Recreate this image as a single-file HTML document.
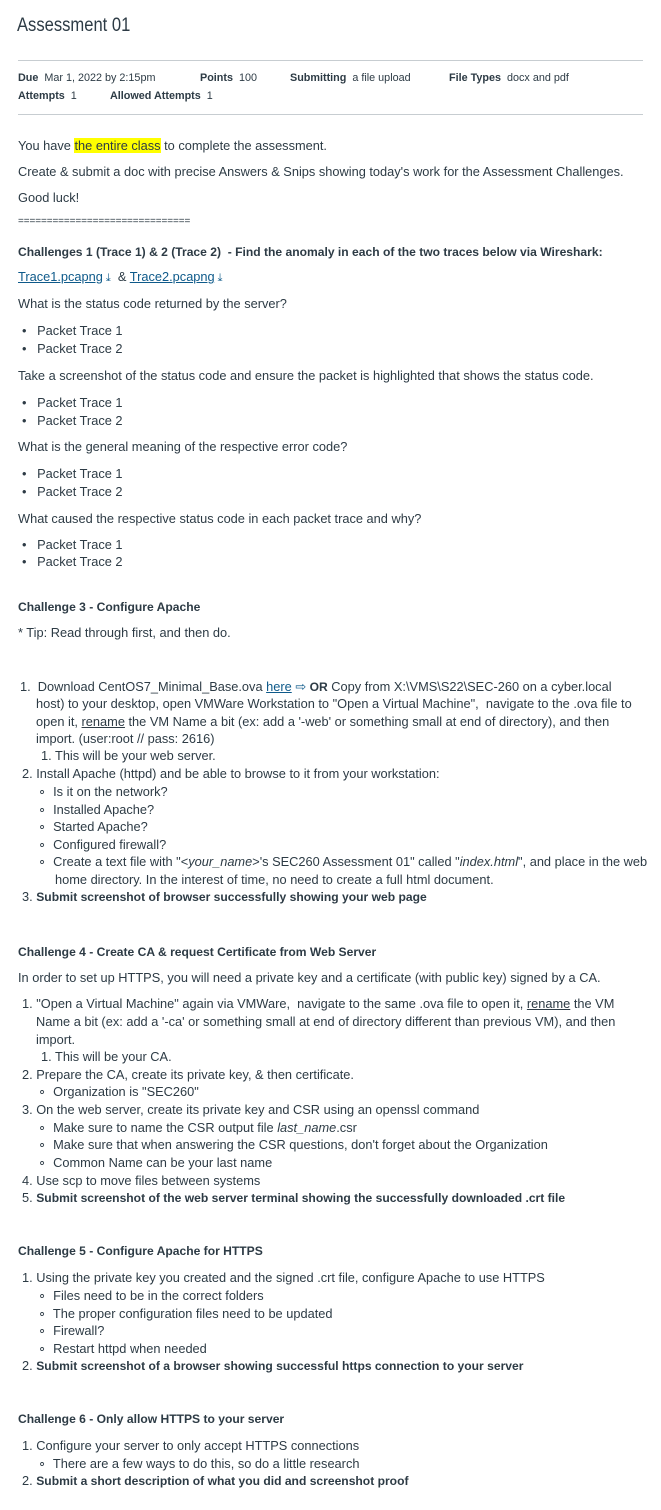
<!DOCTYPE html>
<html><head><meta charset="utf-8"><style>
body{margin:0;width:661px;height:1510px;background:#fff;position:relative;font-family:"Liberation Sans",sans-serif;color:#2d3b45;font-size:12.8px;overflow:hidden}
.l{position:absolute;white-space:nowrap;line-height:18px}
.b,b{font-weight:bold;font-size:12.1px}
a{color:#0e5a8a;text-decoration:underline}
.hr{position:absolute;left:18px;width:625px;height:1px;background:#c7cdd1}
.lb{font-weight:bold}
.meta{font-size:10.8px}
.dl{display:inline-block;font-size:11px;color:#0e5a8a;margin-left:3px}
</style></head><body>
<div class="l" style="top:10px;left:17px;font-size:19.5px;line-height:30px;transform:scaleX(0.85);transform-origin:left">Assessment 01</div>
<div class="hr" style="top:60px"></div>
<div class="l meta" style="top:69px;left:18px"><span class="lb">Due</span>&nbsp; Mar 1, 2022 by 2:15pm</div>
<div class="l meta" style="top:69px;left:200px"><span class="lb">Points</span>&nbsp; 100</div>
<div class="l meta" style="top:69px;left:290px"><span class="lb">Submitting</span>&nbsp; a file upload</div>
<div class="l meta" style="top:69px;left:449px"><span class="lb">File Types</span>&nbsp; docx and pdf</div>
<div class="l meta" style="top:87px;left:18px"><span class="lb">Attempts</span>&nbsp; 1</div>
<div class="l meta" style="top:87px;left:110px"><span class="lb">Allowed Attempts</span>&nbsp; 1</div>
<div class="hr" style="top:114px"></div>

<div class="l" style="top:137px;left:18px">You have <span style="background:#ffff00">the entire class</span> to complete the assessment.</div>
<div class="l" style="top:163px;left:18px">Create &amp; submit a doc with precise Answers &amp; Snips showing today's work for the Assessment Challenges.</div>
<div class="l" style="top:189px;left:18px">Good luck!</div>
<div class="l" style="top:213px;left:18px;font-size:10px;letter-spacing:-0.1px">==============================</div>
<div class="l b" style="top:243px;left:18px">Challenges 1 (Trace 1) &amp; 2 (Trace 2)&nbsp; - Find the anomaly in each of the two traces below via Wireshark:</div>
<div class="l" style="top:268px;left:18px"><a>Trace1.pcapng</a><span class="dl">⤓</span>&nbsp; &amp; <a>Trace2.pcapng</a><span class="dl">⤓</span></div>
<div class="l" style="top:295px;left:18px">What is the status code returned by the server?</div>
<div class="l" style="top:322px;left:22px">•&nbsp;&nbsp; Packet Trace 1</div>
<div class="l" style="top:340px;left:22px">•&nbsp;&nbsp; Packet Trace 2</div>
<div class="l" style="top:367px;left:18px">Take a screenshot of the status code and ensure the packet is highlighted that shows the status code.</div>
<div class="l" style="top:394px;left:22px">•&nbsp;&nbsp; Packet Trace 1</div>
<div class="l" style="top:412px;left:22px">•&nbsp;&nbsp; Packet Trace 2</div>
<div class="l" style="top:438px;left:18px">What is the general meaning of the respective error code?</div>
<div class="l" style="top:465px;left:22px">•&nbsp;&nbsp; Packet Trace 1</div>
<div class="l" style="top:483px;left:22px">•&nbsp;&nbsp; Packet Trace 2</div>
<div class="l" style="top:510px;left:18px">What caused the respective status code in each packet trace and why?</div>
<div class="l" style="top:536px;left:22px">•&nbsp;&nbsp; Packet Trace 1</div>
<div class="l" style="top:553px;left:22px">•&nbsp;&nbsp; Packet Trace 2</div>

<div class="l b" style="top:598px;left:18px">Challenge 3 - Configure Apache</div>
<div class="l" style="top:624px;left:18px">* Tip: Read through first, and then do.</div>

<div class="l" style="top:678px;left:20px">1.&nbsp; Download CentOS7_Minimal_Base.ova <a>here</a> <span style="color:#0e5a8a">⇨</span> <b>OR</b> Copy from X:\VMS\S22\SEC-260 on a cyber.local</div>
<div class="l" style="top:695px;left:36px">host) to your desktop, open VMWare Workstation to "Open a Virtual Machine",&nbsp; navigate to the .ova file to</div>
<div class="l" style="top:713px;left:36px">open it, <u>rename</u> the VM Name a bit (ex: add a '-web' or something small at end of directory), and then</div>
<div class="l" style="top:730px;left:36px">import. (user:root // pass: 2616)</div>
<div class="l" style="top:747px;left:41px">1. This will be your web server.</div>
<div class="l" style="top:765px;left:22px">2. Install Apache (httpd) and be able to browse to it from your workstation:</div>
<div class="l" style="top:783px;left:38px">∘&nbsp; Is it on the network?</div>
<div class="l" style="top:801px;left:38px">∘&nbsp; Installed Apache?</div>
<div class="l" style="top:818px;left:38px">∘&nbsp; Started Apache?</div>
<div class="l" style="top:836px;left:38px">∘&nbsp; Configured firewall?</div>
<div class="l" style="top:853px;left:38px">∘&nbsp; Create a text file with "&lt;<i>your_name</i>&gt;'s SEC260 Assessment 01" called "<i>index.html</i>", and place in the web</div>
<div class="l" style="top:871px;left:55px">home directory. In the interest of time, no need to create a full html document.</div>
<div class="l" style="top:888px;left:22px">3. <b>Submit screenshot of browser successfully showing your web page</b></div>

<div class="l b" style="top:943px;left:18px">Challenge 4 - Create CA &amp; request Certificate from Web Server</div>
<div class="l" style="top:969px;left:18px">In order to set up HTTPS, you will need a private key and a certificate (with public key) signed by a CA.</div>
<div class="l" style="top:995px;left:22px">1. "Open a Virtual Machine" again via VMWare,&nbsp; navigate to the same .ova file to open it, <u>rename</u> the VM</div>
<div class="l" style="top:1013px;left:36px">Name a bit (ex: add a '-ca' or something small at end of directory different than previous VM), and then</div>
<div class="l" style="top:1031px;left:36px">import.</div>
<div class="l" style="top:1048px;left:41px">1. This will be your CA.</div>
<div class="l" style="top:1066px;left:22px">2. Prepare the CA, create its private key, &amp; then certificate.</div>
<div class="l" style="top:1083px;left:38px">∘&nbsp; Organization is "SEC260"</div>
<div class="l" style="top:1101px;left:22px">3. On the web server, create its private key and CSR using an openssl command</div>
<div class="l" style="top:1119px;left:38px">∘&nbsp; Make sure to name the CSR output file <i>last_name</i>.csr</div>
<div class="l" style="top:1136px;left:38px">∘&nbsp; Make sure that when answering the CSR questions, don't forget about the Organization</div>
<div class="l" style="top:1154px;left:38px">∘&nbsp; Common Name can be your last name</div>
<div class="l" style="top:1172px;left:22px">4. Use scp to move files between systems</div>
<div class="l" style="top:1189px;left:22px">5. <b>Submit screenshot of the web server terminal showing the successfully downloaded .crt file</b></div>

<div class="l b" style="top:1242px;left:18px">Challenge 5 - Configure Apache for HTTPS</div>
<div class="l" style="top:1269px;left:22px">1. Using the private key you created and the signed .crt file, configure Apache to use HTTPS</div>
<div class="l" style="top:1287px;left:38px">∘&nbsp; Files need to be in the correct folders</div>
<div class="l" style="top:1305px;left:38px">∘&nbsp; The proper configuration files need to be updated</div>
<div class="l" style="top:1322px;left:38px">∘&nbsp; Firewall?</div>
<div class="l" style="top:1340px;left:38px">∘&nbsp; Restart httpd when needed</div>
<div class="l" style="top:1357px;left:22px">2. <b>Submit screenshot of a browser showing successful https connection to your server</b></div>

<div class="l b" style="top:1410px;left:18px">Challenge 6 - Only allow HTTPS to your server</div>
<div class="l" style="top:1437px;left:22px">1. Configure your server to only accept HTTPS connections</div>
<div class="l" style="top:1455px;left:38px">∘&nbsp; There are a few ways to do this, so do a little research</div>
<div class="l" style="top:1472px;left:22px">2. <b>Submit a short description of what you did and screenshot proof</b></div>
</body></html>
